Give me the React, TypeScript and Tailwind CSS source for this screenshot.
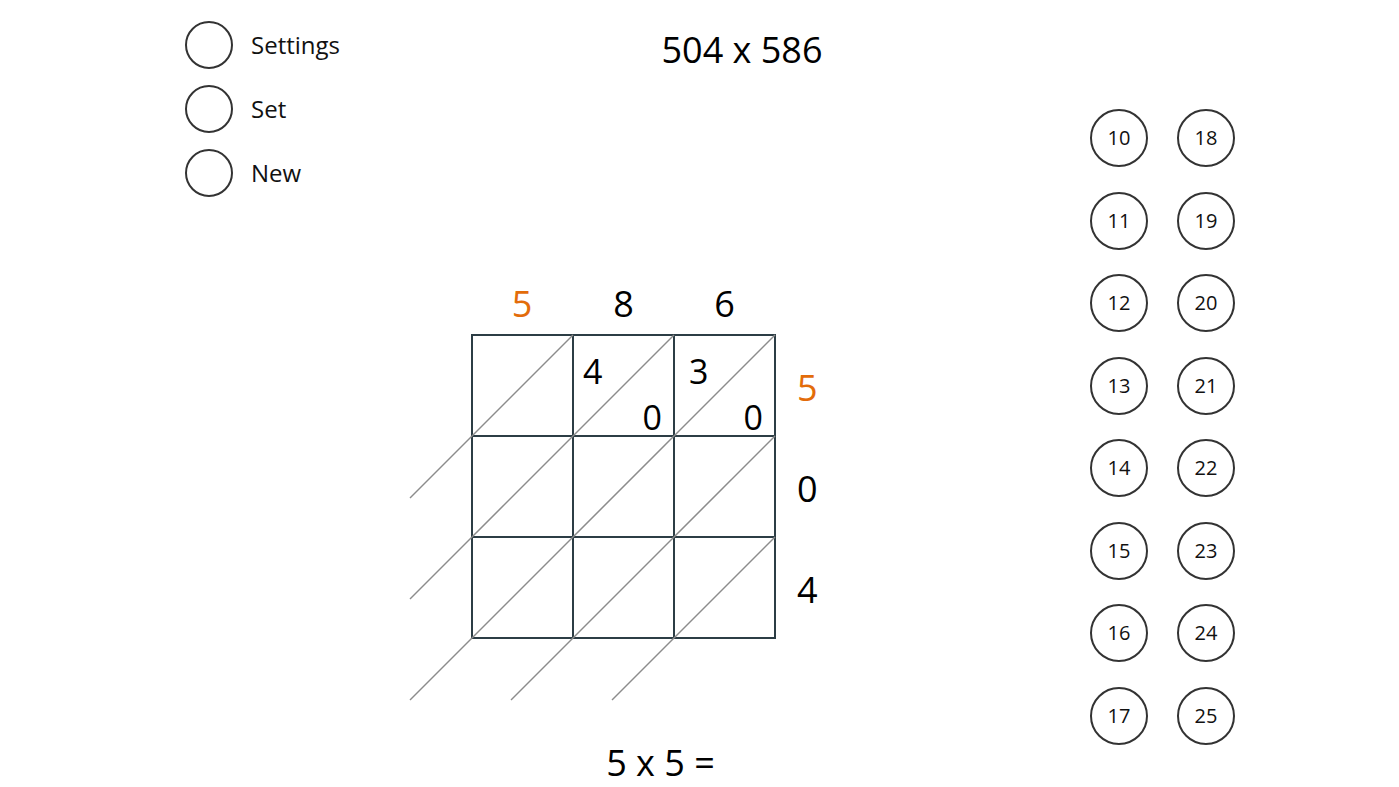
import React from "react";

const ORANGE = "#e36c0a";
const CELL = 101;

const MENU = ["Settings", "Set", "New"];
const TOP_DIGITS = [
  { d: "5", hot: true },
  { d: "8", hot: false },
  { d: "6", hot: false },
];
const SIDE_DIGITS = [
  { d: "5", hot: true },
  { d: "0", hot: false },
  { d: "4", hot: false },
];

// only the first row has partial products filled in
const CELLS: { tl?: string; br?: string; pad: string }[] = [
  { pad: "pl-[9px]" },
  { tl: "4", br: "0", pad: "pl-[9px]" },
  { tl: "3", br: "0", pad: "pl-[14px]" },
  { pad: "pl-[9px]" },
  { pad: "pl-[9px]" },
  { pad: "pl-[9px]" },
  { pad: "pl-[9px]" },
  { pad: "pl-[9px]" },
  { pad: "pl-[9px]" },
];

const NUMBERS = Array.from({ length: 16 }, (_, i) => i + 10);

function Diagonals() {
  const EXT = 62;
  const lines: { x1: number; y1: number; x2: number; y2: number }[] = [];
  for (let r = 0; r < 3; r++) {
    for (let c = 0; c < 3; c++) {
      lines.push({ x1: c * CELL + 1, y1: (r + 1) * CELL + 1, x2: (c + 1) * CELL + 1, y2: r * CELL + 1 });
    }
  }
  // lattice diagonals run on past the grid, down-left
  for (let i = 1; i <= 3; i++) {
    lines.push({ x1: 1, y1: i * CELL + 1, x2: 1 - EXT, y2: i * CELL + 1 + EXT });
  }
  for (let i = 1; i < 3; i++) {
    lines.push({ x1: i * CELL + 1, y1: 3 * CELL + 1, x2: i * CELL + 1 - EXT, y2: 3 * CELL + 1 + EXT });
  }
  return (
    <svg
      className="absolute left-0 top-0 overflow-visible pointer-events-none"
      width={305}
      height={305}
      viewBox="0 0 305 305"
    >
      {lines.map((l, i) => (
        <line key={i} {...l} stroke="#8c8c8c" strokeWidth={1.5} />
      ))}
    </svg>
  );
}

export default function App() {
  return (
    <div
      className="flex h-[787px] w-full bg-white text-black overflow-hidden"
      style={{ fontFamily: '"Open Sans", "Noto Sans", sans-serif' }}
    >
      {/* Menu */}
      <div className="w-[409px] shrink-0 pl-[185px] pt-[21px] flex flex-col gap-[16px]">
        {MENU.map((m) => (
          <button key={m} className="flex items-center gap-[18px] text-left">
            <span className="w-[48px] h-[48px] rounded-full border-2 border-[#333]" />
            <span className="text-[24px] leading-none text-[#111]">{m}</span>
          </button>
        ))}
      </div>

      {/* Problem + lattice */}
      <div className="w-[681px] shrink-0 flex flex-col">
        <div className="w-[666px] pt-[26px] text-center text-[36px] leading-[48px]">504 x 586</div>

        <div className="ml-[62px] mt-[206px] flex flex-col">
          <div className="flex w-[305px] h-[48px] mb-[6px]">
            {TOP_DIGITS.map((t, i) => (
              <div
                key={i}
                className={`w-[101px] text-center text-[36px] leading-[48px] ${i === 0 ? "pl-[1px]" : "pl-[2px]"}`}
                style={t.hot ? { color: ORANGE } : undefined}
              >
                {t.d}
              </div>
            ))}
          </div>

          <div className="flex">
            <div className="relative w-[305px] h-[305px]">
              <div className="grid grid-cols-3 gap-[2px] p-[2px] w-[305px] h-[305px] bg-[#2c3d45]">
                {CELLS.map((c, i) => (
                  <div key={i} className={`bg-white flex flex-col justify-between pt-[18px] pb-[1px] pr-[11px] ${c.pad}`}>
                    <span className="text-[34px] leading-none h-[34px]">{c.tl ?? ""}</span>
                    <span className="text-[34px] leading-none h-[34px] self-end">{c.br ?? ""}</span>
                  </div>
                ))}
              </div>
              <Diagonals />
            </div>
            <div className="flex flex-col pl-[21px]">
              {SIDE_DIGITS.map((s, i) => (
                <div
                  key={i}
                  className="h-[101px] flex items-center pt-[6px] text-[36px] leading-[48px]"
                  style={s.hot ? { color: ORANGE } : undefined}
                >
                  {s.d}
                </div>
              ))}
            </div>
          </div>
        </div>

        <div className="w-[503px] mt-[106px] text-center text-[36px] leading-[36px]">5 x 5 =</div>
      </div>

      {/* Number picker */}
      <div className="pt-[109px]">
        <div className="grid grid-flow-col grid-rows-8 gap-x-[29px] gap-y-[24.5px]">
          {NUMBERS.map((n) => (
            <button
              key={n}
              className="w-[58px] h-[58px] rounded-full border-2 border-[#333] flex items-center justify-center text-[20px] text-[#111]"
            >
              {n}
            </button>
          ))}
        </div>
      </div>
    </div>
  );
}
